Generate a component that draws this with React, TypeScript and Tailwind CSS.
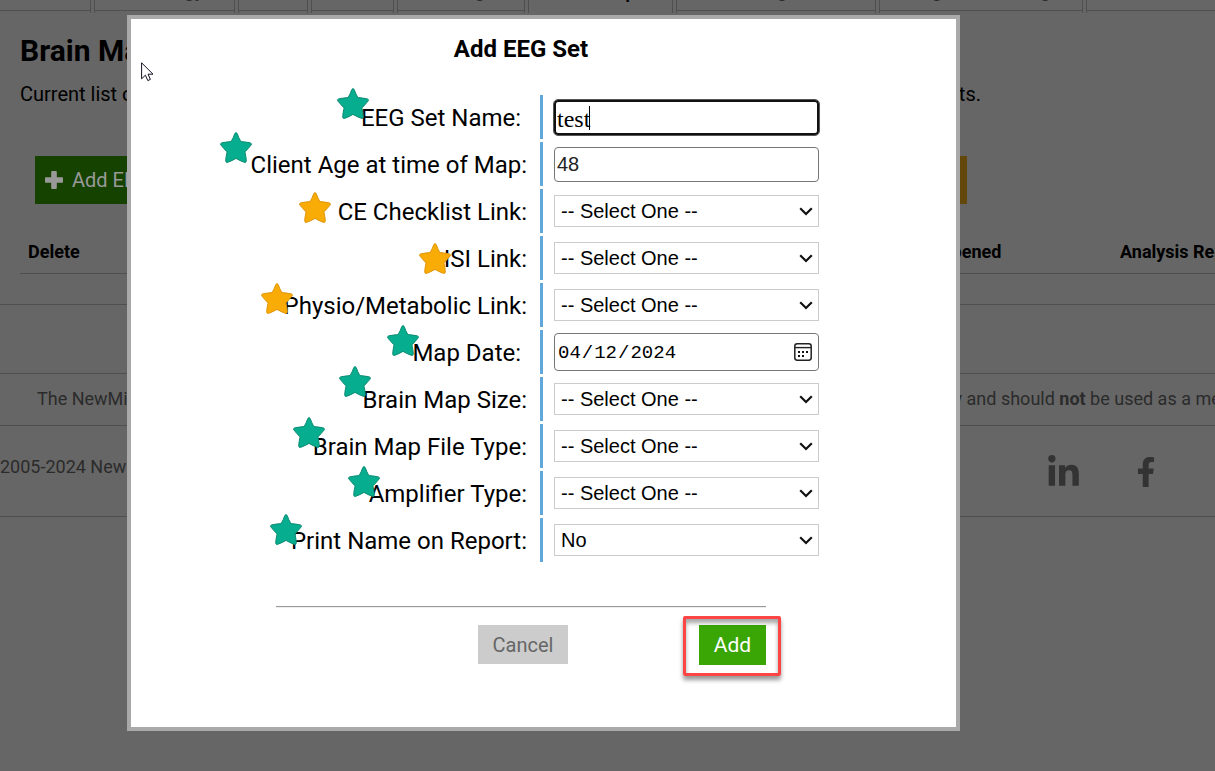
import type { ReactNode } from 'react';
import { FaFacebookF, FaLinkedinIn } from 'react-icons/fa';

const tabs = [
  { label: 'Home', width: 'w-[91px]' },
  { label: 'Pathology', width: 'w-[141px]' },
  { label: 'Client', width: 'w-[70px]' },
  { label: 'Notes', width: 'w-[83px]' },
  { label: 'Billing', width: 'w-[128px]' },
  { label: 'Brain Maps', width: 'w-[145px]', active: true },
  { label: 'Training Files', width: 'w-[200px]' },
  { label: 'Cognitive Training', width: 'w-[204px]' },
  { label: 'Account Settings', width: 'w-[190px]' },
];

function Star({ color, position }: { color: 'green' | 'gold'; position: string }) {
  return (
    <svg className={`absolute h-8 w-8 ${position}`} viewBox="0 0 32 32" aria-hidden="true">
      <path
        d="M14.8 1.5Q16 -.3 17.2 1.5Q18.6 5.8 20.9 9.6Q25.6 9.9 30.4 10.9Q32.3 11.6 31 13.1Q28.2 16.8 24.9 19.9Q26.1 24.6 26.3 28.9Q26.1 31 24.2 30.3Q20 28.7 16 26.4Q12 28.7 7.8 30.3Q5.9 31 5.7 28.9Q5.9 24.6 7.1 19.9Q3.8 16.8 1 13.1Q-.3 11.6 1.6 10.9Q6.4 9.9 11.1 9.6Q13.4 5.8 14.8 1.5Z"
        fill={color === 'green' ? '#06ae8f' : '#f9ab06'}
        stroke={color === 'green' ? '#0b8a72' : '#de950c'}
        strokeWidth="1"
        strokeLinejoin="round"
      />
    </svg>
  );
}

interface FieldProps {
  id: string;
  label: string;
  color: 'green' | 'gold';
  position: string;
  children: ReactNode;
}

function Field({ id, label, color, position, children }: FieldProps) {
  return (
    <div className="grid h-11 grid-cols-2">
      <div className="relative flex items-center justify-end border-r-[3px] border-[#62a7dc] pr-[13px] pt-[2px] text-2xl">
        <label htmlFor={id} className="whitespace-pre">{label}</label>
        <Star color={color} position={position} />
      </div>
      <div className="flex items-center pl-[11px]">
        <div className="relative w-[265px]">{children}</div>
      </div>
    </div>
  );
}

function SelectBox({ id, option = '-- Select One --' }: { id: string; option?: string }) {
  return (
    <>
      <select
        id={id}
        className="block h-8 w-full appearance-none border border-[#ccc] bg-white pl-[6px] font-['Liberation_Sans',sans-serif] text-[20px] leading-6"
      >
        <option>{option}</option>
      </select>
      <svg className="pointer-events-none absolute right-[6px] top-3 h-[9px] w-[14px]" viewBox="0 0 14 9" fill="none" aria-hidden="true">
        <path d="M1.2 1.2L7 7L12.8 1.2" stroke="#111" strokeWidth="2.2" />
      </svg>
    </>
  );
}

function AddSetDialog() {
  return (
    <div
      role="dialog"
      aria-labelledby="dialog-title"
      className="relative flex-1 border-4 border-[#a9a9a9] bg-white pb-[62px] pt-4 text-black"
    >
      <h2 id="dialog-title" className="ml-[145px] w-[490px] text-center text-2xl/7 font-bold">
        Add EEG Set
      </h2>

      <form className="mt-8" onSubmit={(e) => e.preventDefault()}>
        <div className="mr-px flex flex-col gap-[3px]">
          <Field id="set-name" label={'EEG Set Name: '} color="green" position="right-[171px] -top-[7px]">
            <input
              id="set-name"
              type="text"
              defaultValue="test"
              className="block h-[35px] w-full rounded border-2 border-[#111] pl-px pt-1 font-['Liberation_Serif',serif] text-2xl/6 outline outline-[#555]"
            />
            <span className="absolute left-[35px] top-[6px] h-6 w-px bg-black" />
          </Field>
          <Field id="age" label="Client Age at time of Map:" color="green" position="right-[288px] -top-[10px]">
            <input
              id="age"
              type="text"
              defaultValue="48"
              className="block h-[35px] w-full rounded border border-[#767676] pl-[2px] font-['Liberation_Sans',sans-serif] text-[20px] text-[#222]"
            />
          </Field>
          <Field id="checklist" label="CE Checklist Link:" color="gold" position="right-[209px] top-[3px]">
            <SelectBox id="checklist" />
          </Field>
          <Field id="isi" label="ISI Link:" color="gold" position="right-[89px] top-[7px]">
            <SelectBox id="isi" />
          </Field>
          <Field id="physio" label="Physio/Metabolic Link:" color="gold" position="right-[247px] top-0">
            <SelectBox id="physio" />
          </Field>
          <Field id="map-date" label={'Map Date: '} color="green" position="right-[121px] -top-[5px]">
            <input
              id="map-date"
              type="date"
              defaultValue="2024-04-12"
              className="block h-[38px] w-full rounded border border-[#767676] pl-[2px] pt-[2px] font-['Liberation_Mono',monospace] text-[19px] [&::-webkit-calendar-picker-indicator]:opacity-0"
            />
            <svg className="pointer-events-none absolute right-[7px] top-[10px] h-[18px] w-[18px]" viewBox="0 0 18 18" aria-hidden="true">
              <rect x=".8" y=".8" width="16.4" height="16.4" rx="2.4" fill="none" stroke="#222" strokeWidth="1.5" />
              <path d="M1 4.6H17" stroke="#222" strokeWidth="1.4" />
              <path d="M4 8h2v2H4zM8 8h2v2H8zM12 8h2v2h-2zM4 12h2v2H4zM8 12h2v2H8z" fill="#111" />
            </svg>
          </Field>
          <Field id="map-size" label="Brain Map Size:" color="green" position="right-[169px] -top-[11px]">
            <SelectBox id="map-size" />
          </Field>
          <Field id="file-type" label="Brain Map File Type:" color="green" position="right-[215px] -top-[7px]">
            <SelectBox id="file-type" />
          </Field>
          <Field id="amplifier" label="Amplifier Type:" color="green" position="right-[160px] -top-[5px]">
            <SelectBox id="amplifier" />
          </Field>
          <Field id="print-name" label="Print Name on Report:" color="green" position="right-[238px] -top-[4px]">
            <SelectBox id="print-name" option="No" />
          </Field>
        </div>

        <div className="ml-[145px] mt-11 w-[490px]">
          <hr className="h-[2px] border-b border-t border-b-[#eee] border-t-[#999]" />
          <div className="mt-[17px] flex items-start justify-end gap-[131px] text-[20px]">
            <button type="button" className="h-[39px] w-[90px] bg-[#ccc] text-[#666]">
              Cancel
            </button>
            <div className="relative">
              <button type="submit" className="h-10 w-[67px] bg-[#3aa605] pt-[2px] text-[21px] text-white">
                Add
              </button>
              <div className="pointer-events-none absolute -bottom-[11px] -left-4 -right-[15px] -top-[9px] rounded-xs border-[3px] border-[#fd4545] shadow-[0_4px_4px_rgba(0,0,0,0.4),inset_0_4px_4px_rgba(0,0,0,0.35)]" />
            </div>
          </div>
        </div>
      </form>

      <svg className="absolute left-[10px] top-[43px] h-[20px] w-[13px]" viewBox="0 0 13 20" aria-hidden="true">
        <path d="M.6 .8V16.8L4.4 13.2L6.8 18.6L9.4 17.4L7 12.2H12Z" fill="#fff" stroke="#112" strokeWidth="1" />
      </svg>
    </div>
  );
}

export default function App() {
  return (
    <div className="relative min-h-screen overflow-hidden bg-[#666] font-[Roboto,sans-serif] text-black">
      {/* Tabs */}
      <nav className="flex h-[13px] gap-[3px] overflow-hidden">
        {tabs.map((tab) => (
          <div key={tab.label} className={`shrink-0 border-r border-[#4f4f4f] not-first:border-l ${tab.width}`}>
            <a
              href="#"
              className={`flex h-[11px] items-end justify-center whitespace-nowrap pb-[9px] text-[17px] leading-none font-bold ${
                tab.active ? 'text-black' : 'border-b border-[#4f4f4f] text-[#292929]'
              }`}
            >
              {tab.label}
            </a>
          </div>
        ))}
      </nav>

      {/* Page heading and actions */}
      <header className="whitespace-nowrap px-5 pt-5">
        <h1 className="text-3xl font-bold">Brain Maps</h1>
        <div className="mt-[11px] flex w-[961px] justify-between text-xl/7">
          <p>Current list of</p>
          <p>EEG sets.</p>
        </div>
      </header>
      <div className="ml-[35px] mt-12 flex w-[932px] justify-between text-xl text-[#999]">
        <button type="button" className="flex h-12 items-center gap-[9px] bg-[#164200] px-[10px]">
          <svg className="h-[18px] w-[18px]" viewBox="0 0 18 18" fill="currentColor" aria-hidden="true">
            <path d="M7 0h4q.8 0 .8 .8V6.2h5.4q.8 0 .8 .8v4q0 .8-.8 .8h-5.4v5.4q0 .8-.8 .8H7q-.8 0-.8-.8v-5.4H.8Q0 11.800 0 11V7q0-.8 .8-.8h5.4V.8Q6.200 0 7 0Z" />
          </svg>
          Add EEG Set
        </button>
        <button type="button" className="h-12 bg-[#64470a] px-4">Help</button>
      </div>

      {/* Sets table */}
      <div className="h-[101px] border-b border-[#4f4f4f] pl-5 pt-7">
        <table className="w-[1400px] table-fixed text-left text-lg">
          <thead>
            <tr className="h-[41px] border-b border-[#4f4f4f]">
              <th className="w-[872px] px-2">Delete</th>
              <th className="w-[220px] px-2">Last Opened</th>
              <th className="px-2">Analysis Report</th>
            </tr>
          </thead>
        </table>
      </div>
      <div className="h-[69px] border-b border-[#4f4f4f]" />

      {/* Footer */}
      <footer className="text-lg text-[#2b2b2b]">
        <div className="flex h-[52px] items-center whitespace-nowrap border-b border-[#4f4f4f] pb-[2px] pl-[37px]">
          <p className="w-[892px] shrink-0">The NewMind analysis</p>
          <p>
            only and should <b>not</b> be used as a medical
          </p>
        </div>
        <div className="flex h-[91px] items-center justify-between border-b border-[#4f4f4f] pr-[54px]">
          <p className="pb-2">2005-2024 NewMind</p>
          <div className="flex items-center gap-[50px] pt-[2px] text-[#333]">
            <a href="#" aria-label="LinkedIn"><FaLinkedinIn className="text-[35px]" /></a>
            <a href="#" aria-label="Facebook"><FaFacebookF className="text-[30px]" /></a>
          </div>
        </div>
      </footer>

      {/* Modal layer */}
      <div className="absolute inset-0 flex items-start pl-[127px] pr-[255px] pt-[15px]">
        <AddSetDialog />
      </div>
    </div>
  );
}
